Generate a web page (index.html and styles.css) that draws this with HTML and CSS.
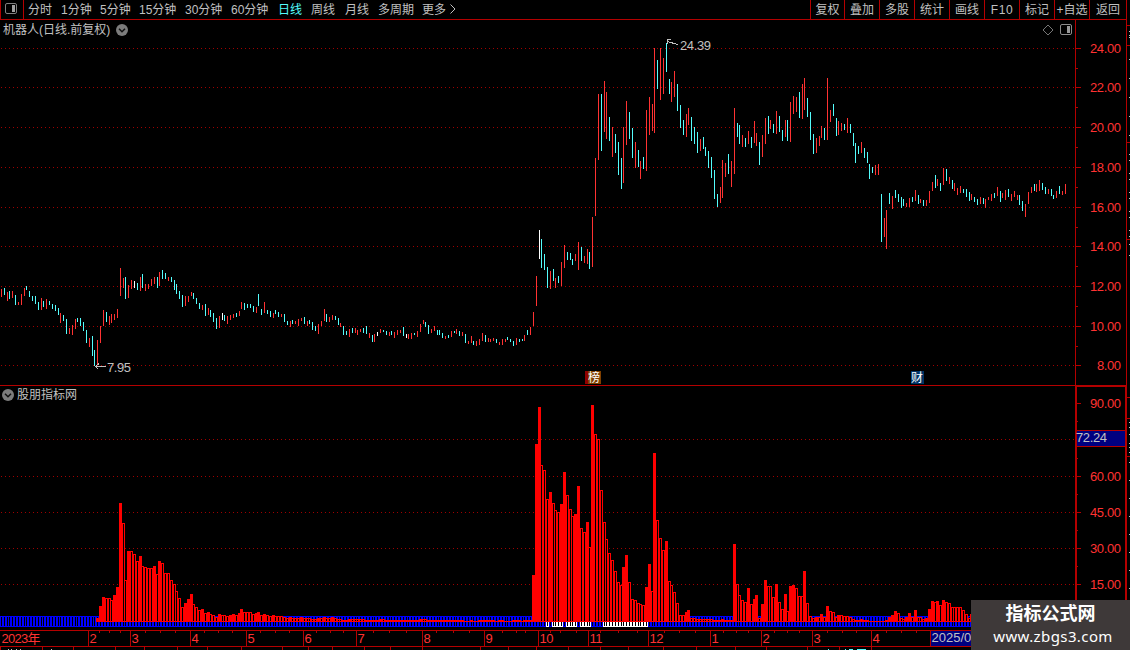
FILE: index.html
```html
<!DOCTYPE html>
<html lang="zh-CN">
<head>
<meta charset="utf-8">
<title>机器人 日线</title>
<link rel="stylesheet" href="styles.css">
</head>
<body>
<div class="terminal">
  <div class="workspace">
    <header class="toolbar">
      <button class="panel-toggle" aria-label="panel">
        <svg width="12" height="11" viewBox="0 0 12 11"><rect x=".5" y=".5" width="11" height="10" rx="1.5" fill="none" stroke="#808080"/><rect x="7" y="2" width="3" height="7" fill="#a0a0a0"/></svg>
      </button>
      <nav class="periods">
        <span>分时</span><span>1分钟</span><span>5分钟</span><span>15分钟</span><span>30分钟</span><span>60分钟</span><span class="active">日线</span><span>周线</span><span>月线</span><span>多周期</span><span>更多</span>
        <svg width="6" height="10" viewBox="0 0 6 10"><path d="M.5 .5 5 5 .5 9.5" fill="none" stroke="#c0c0c0"/></svg>
      </nav>
      <nav class="actions">
        <span>复权</span><span>叠加</span><span>多股</span><span>统计</span><span>画线</span><span class="latin">F10</span><span>标记</span><span>+自选</span><span>返回</span>
      </nav>
    </header>

    <section class="panel price">
      <svg class="plot" id="price-plot" width="1075" height="366" viewBox="0 20 1075 366"></svg>
      <svg class="axis" id="price-axis" width="52" height="366" viewBox="1075 20 52 366"></svg>
      <div class="caption">
        <span>机器人(日线.前复权)</span>
        <svg width="12" height="12" viewBox="0 0 12 12"><circle cx="6" cy="6" r="6" fill="#7c7c7c"/><path d="M3 4.7 6 7.7 9 4.7" fill="none" stroke="#111" stroke-width="1.5"/></svg>
      </div>
      <div class="tools">
        <svg width="12" height="12" viewBox="0 0 12 12"><path d="M6 1 11 6 6 11 1 6Z" fill="none" stroke="#777"/></svg>
        <svg width="12" height="12" viewBox="0 0 12 12"><rect x=".5" y=".5" width="11" height="10" rx="1.5" fill="none" stroke="#8c8c8c"/><rect x="7" y="2" width="3" height="7" fill="#999"/></svg>
      </div>
      <span class="badge rank">榜</span>
      <span class="badge finance">财</span>
    </section>

    <section class="panel indicator">
      <svg class="plot" id="volume-plot" width="1075" height="244" viewBox="0 386 1075 244"></svg>
      <svg class="axis" id="volume-axis" width="52" height="244" viewBox="1075 386 52 244"></svg>
      <div class="caption">
        <svg width="12" height="12" viewBox="0 0 12 12"><circle cx="6" cy="6" r="6" fill="#7c7c7c"/><path d="M3 4.7 6 7.7 9 4.7" fill="none" stroke="#111" stroke-width="1.5"/></svg>
        <span>股朋指标网</span>
      </div>
    </section>

    <footer class="timeline">
      <svg id="time-axis" width="1127" height="20" viewBox="0 630 1127 20"></svg>
    </footer>
  </div>
  <svg class="edge" id="edge" width="3" height="650" viewBox="1127 0 3 650"></svg>
  <aside class="watermark">
    <strong>指标公式网</strong>
    <span>www.zbgs3.com</span>
  </aside>
</div>
<script src="chart.js"></script>
</body>
</html>
```
FILE: styles.css
```css
* { box-sizing: border-box; }

body {
  margin: 0;
  background: #000;
  color: #c0c0c0;
  font: 12px/16px "Liberation Sans", "Noto Sans CJK SC", sans-serif;
}

svg { display: block; flex: none; }

.terminal {
  position: relative;
  display: flex;
  width: 1130px;
  height: 650px;
  overflow: hidden;
}

.workspace {
  display: flex;
  flex-direction: column;
  width: 1127px;
  border-right: 1px solid #b40000;
}

.toolbar {
  display: flex;
  height: 20px;
  border-bottom: 1px solid #b40000;
  white-space: nowrap;
}

.panel-toggle {
  display: flex;
  width: 24px;
  padding: 3px 0 0 4px;
  border: solid #b40000;
  border-width: 0 1px 0 1px;
  background: none;
}

.periods {
  display: grid;
  grid-template-columns: 33px 39px 39px 46px 46px 47px 33px 34px 33px 44px 28px 10px;
  padding: 2px 0 0 4px;
}

.periods svg { margin-top: 2px; }

.active { color: #54fcfc; }

.actions {
  display: grid;
  grid-template-columns: 34px repeat(7, 35px) 37px;
  margin-left: auto;
  text-align: center;
}

.actions span {
  padding-top: 2px;
  border-left: 1px solid #b40000;
}

.latin { letter-spacing: 0.6px; }

.panel {
  position: relative;
  display: flex;
}

.caption {
  position: absolute;
  top: 1px;
  left: 3px;
  display: flex;
  align-items: center;
  gap: 6px;
}

.caption span { padding-top: 1px; }

.indicator .caption {
  top: 0;
  left: 2px;
  gap: 3px;
}

.tools {
  position: absolute;
  top: 4px;
  right: 54px;
  display: flex;
  gap: 6px;
}

.badge {
  position: absolute;
  top: 351px;
  height: 13px;
  color: #fff;
  line-height: 14px;
}

.rank {
  left: 585px;
  width: 16px;
  padding-left: 3px;
  background: linear-gradient(90deg, #900000 3px, #804000 3px);
}

.finance {
  left: 911px;
  width: 13px;
  background: #003366;
}

.timeline { height: 20px; }

.tick { font-size: 13px; fill: #ff3232; }
.mark { font-size: 13px; fill: #c0c0c0; }

.watermark {
  position: absolute;
  right: 0;
  bottom: 0;
  display: flex;
  flex-direction: column;
  width: 159px;
  height: 50px;
  padding-top: 3px;
  background: #3e3939;
  color: #fff;
  text-align: center;
}

.watermark strong {
  font: 700 18px/22px "Liberation Sans", "Noto Sans CJK SC", sans-serif;
}

.watermark span {
  padding-left: 5px;
  font: 15px/22px "Noto Sans", sans-serif;
  letter-spacing: 0.4px;
  white-space: nowrap;
}
```
FILE: chart.js
```js
const RED = '#ff3232', CYAN = '#54fcfc', LINE = '#b40000';
const TONES = { r: RED, c: CYAN, w: '#ffffff' };

// Runs of candles: origin in px, then "x high low tone" in thirds of a pixel from it.
const CANDLES = [
  [0, 250, '4 117 141 r;13 114 135 c;22 126 153 r;28 123 147 c;37 123 144 r;46 135 165 c;55 156 165 r;64 132 165 r;73 114 138 r;79 108 120 c;88 123 141 c;97 138 153 c;106 138 162 c;115 156 180 c;124 144 180 r;130 153 171 c;139 147 177 r;148 153 165 c;157 162 177 c;166 165 183 c;175 174 195 c;181 189 219 r;190 195 213 c;199 207 252 c;208 234 252 r;217 225 255 r;226 207 237 r;232 204 216 c;241 204 228 c;250 216 243 c;259 240 279 c;268 264 291 r;277 258 318 c;283 300 348 c;292 270 345 r;301 228 279 r;310 180 228 r;319 186 216 c;328 198 225 r;334 192 219 r;343 192 210 r;352 177 204 r;361 54 138 r;370 84 114 r;376 81 147 c;385 105 144 r;394 90 117 r;403 93 114 w;412 99 120 c;421 81 123 r;427 72 114 c;436 102 123 r;445 102 117 r;454 87 108 r;463 81 102 r;472 81 114 c;478 66 108 r;487 60 87 c;496 69 87 c;505 81 93 r;514 81 96 c;523 90 120 c;529 102 132 c;538 123 147 c;547 135 171 c;556 138 168 r;565 138 156 r;574 126 138 r;580 129 147 c;589 144 162 c;598 159 177 c;607 165 180 r;616 162 198 c;625 174 195 r;631 180 201 c;640 189 216 c;649 204 237 c;658 198 234 r;667 189 210 w;673 195 213 c;682 198 222 r;691 195 210 r;700 192 204 r;709 189 201 c;718 183 198 r;724 156 177 r;733 159 180 c;742 162 174 c;751 162 174 c;760 168 186 c;769 171 189 r;775 132 168 c'],
  [260, 270, '4 117 135 c;13 96 129 r;22 120 132 c;31 123 141 c;40 129 144 r;46 120 132 c;55 126 141 c;64 132 141 r;73 132 156 c;82 153 165 c;91 153 171 r;97 150 162 c;106 153 162 r;115 147 168 r;124 144 153 r;133 141 162 c;142 153 168 r;148 150 162 c;157 156 180 c;166 168 183 c;175 162 192 r;184 153 168 r;193 117 153 r;199 132 156 c;208 141 156 r;217 135 150 r;226 138 150 c;235 144 165 c;241 159 171 r;250 168 195 c;259 183 195 c;268 177 201 r;277 174 189 c;286 174 189 r;292 180 195 r;301 177 186 r;310 174 189 c;319 168 192 c;328 189 204 r;337 195 216 c;343 192 216 r;352 186 198 w;361 177 189 r;370 180 186 c;379 183 195 c;388 186 198 r;394 183 195 c;403 186 204 r;412 180 195 r;421 180 189 r;430 171 198 c;439 192 204 w;445 192 207 r;454 189 207 r;463 189 195 c;472 183 201 r;481 162 186 r;490 150 162 r;496 156 171 c;505 165 192 c;514 177 189 r;523 168 183 r;532 180 195 c;538 180 195 c;547 189 204 c;556 198 207 r;565 195 204 c;574 183 201 r;583 183 189 c;589 177 192 r;598 183 198 c;607 186 198 r;616 192 219 c;625 213 222 r;634 198 219 r;640 213 225 c;649 213 228 r;658 207 225 r;667 189 213 r;676 195 216 c;685 204 216 r;691 207 216 r;700 204 213 r;709 207 219 c;718 216 225 r;727 207 225 r;736 207 216 r;742 201 210 c;751 207 216 c;760 213 228 c;769 204 225 r;778 207 216 c;787 207 213 c;793 195 213 r;802 180 195 c;811 171 195 r;820 126 168 r;829 18 108 r'],
  [520, 30, '58 600 687 w;64 627 714 c;73 672 720 c;82 711 774 c;91 723 777 r;100 717 753 c;106 744 774 r;115 738 759 c;124 696 768 r;133 645 714 r;142 666 690 c;151 669 690 c;157 687 705 c;166 672 693 r;175 636 720 r;184 651 693 c;193 678 699 r;202 657 702 r;208 666 717 c;217 561 711 r;226 384 558 r;235 192 390 r;244 192 363 c;253 153 306 r;259 186 327 r;268 261 333 c;277 291 381 r;286 312 369 c;295 336 435 c;304 384 477 c;310 291 459 r;319 213 345 r;328 246 327 c;337 294 384 c;346 336 414 r;355 360 411 c;361 393 447 r;370 381 417 c;379 240 423 r;388 201 315 r;397 222 303 r;403 54 309 r;412 90 177 c;421 54 210 r'],
  [660, 30, '10 84 192 r;19 39 126 c;28 147 192 c;34 156 216 r;43 123 201 r;52 162 243 c;61 225 294 c;70 270 315 c;79 252 321 r;85 234 285 r;94 261 333 c;103 291 342 c;112 306 369 c;121 327 363 r;130 321 357 c;136 351 378 c;145 363 414 c;154 381 444 c;163 420 507 c;172 492 531 c;181 471 519 r;187 390 504 r;196 399 441 r;205 372 432 c;214 393 471 r;223 234 432 r;232 279 321 c;238 285 342 c;247 315 351 r;256 324 351 c;265 303 342 r;274 321 354 c;283 273 339 r;289 309 348 r;298 336 405 c;307 315 381 r;316 264 342 r;325 258 312 c;331 270 297 r;340 282 309 c;349 243 312 r;358 258 306 c;367 300 333 c;376 270 321 r;382 270 333 c;391 216 336 r;400 198 252 r;409 201 246 r;418 186 264 c;427 162 267 r;433 144 240 r;442 204 261 c;451 246 330 c;460 312 372 c;469 324 369 r;478 318 348 r;484 288 324 r;493 294 330 c;502 144 330 r;511 240 276 r;520 222 258 c;529 264 318 c;535 273 315 r;544 279 303 r;553 282 300 c;562 264 309 r;571 282 309 c;580 309 348 c;586 339 399 c;595 348 372 c;604 336 369 r;613 354 384 c;622 366 399 c;628 402 447 c;637 411 429 c;646 405 435 r;655 402 435 r'],
  [860, 140, '64 162 306 c;73 234 291 r;79 210 327 r;88 159 192 c;97 168 207 r;106 150 174 c;115 162 186 c;124 171 204 c;130 177 198 c;139 189 201 r;148 174 201 r;157 171 186 c;166 150 183 r;175 165 192 c;181 177 189 r;190 180 198 c;199 180 198 r;208 153 189 r;217 126 153 r;226 105 144 c;232 117 138 r;241 129 153 c;250 84 135 r;259 87 123 c;268 111 132 r;277 120 147 c;283 129 153 r;292 144 165 r;301 138 159 r;310 147 159 c;319 147 171 c;328 156 183 c;334 162 180 r;343 171 186 c;352 177 195 c;361 171 192 r;370 174 192 c;376 177 204 r;385 171 180 r;394 162 183 r;403 159 174 c;412 141 168 r;421 153 186 c;427 159 174 r;436 150 180 r;445 147 171 c;454 162 183 r;463 153 171 r;472 165 180 r;478 165 195 c;487 183 213 c;496 192 231 r;505 156 192 r;514 141 159 r;523 132 153 c;529 132 156 r;538 120 153 r;547 129 150 c;556 141 162 c;565 147 162 r;574 147 168 c;580 165 177 c;589 153 174 r;598 138 162 c;607 153 165 r;616 132 162 r']
];

// Indicator bars: same units, "x top".
const BARS = [
  [0, 490, '292 384;301 348;310 321;319 324;328 324;334 330;343 315;352 291;361 39;370 99;376 270;385 183;394 183;403 192;412 213;421 198;427 228;436 231;445 234;454 234;463 228;472 252;478 213;487 219;496 249;505 249;514 270;523 282;529 303;538 324;547 351;556 339;565 327;574 312;580 342;589 351;598 360;607 357;616 369;625 366;631 372;640 375;649 381;658 372;667 375;673 375;682 378;691 375;700 372;709 375;718 369;724 357;733 366;742 366;751 366;760 372;769 369;775 366;784 375'],
  [260, 600, '4 45;13 42;22 45;31 48;40 45;46 48;55 48;64 48;73 51;82 54;91 51;97 54;106 54;115 54;124 51;133 54;142 54;148 54;157 57;166 57;175 54;184 54;193 51;199 54;208 54;217 51;226 54;235 57;241 57;250 60;259 60;268 57;277 57;286 57;292 57;301 57;310 57;319 60;328 60;337 60;343 60;352 60;361 57;370 57;379 60;388 60;394 60;403 60;412 60;421 60;430 60;439 60;445 60;454 60;463 60;472 60;481 57;490 57;496 57;505 60;514 60;523 60;532 60;538 60;547 60;556 60;565 60;574 60;583 60;589 60;598 60;607 60;634 60;658 60;667 60;676 60;685 60;691 60;700 60;718 60;727 60;760 60;769 60;778 60;793 60;802 60;811 60'],
  [520, 360, '40 645;49 252;58 141;64 315;73 330;82 417;91 396;100 429;106 450;115 456;124 432;133 336;142 405;151 447;157 468;166 462;175 378;184 504;193 516;202 486;208 561;217 135;226 222;235 237;244 390;253 486;259 537;268 579;277 600;286 633;295 666;304 675;310 621;319 585;328 666;337 717;346 720;355 729;361 732;370 735;379 681;388 612;397 693;403 279;412 480;421 534;430 570;439 543;448 663;454 675;463 696;472 729;481 765;490 765;499 756;505 750'],
  [680, 530, '34 264;43 264;52 267;61 267;70 267;76 267;85 267;94 267;103 270;112 270;121 270;127 267;136 270;145 270;154 270;163 42;172 162;178 195;187 210;196 216;205 174;214 222;223 207;229 195;238 264;247 222;256 150;265 168;271 168;280 201;289 162;298 216;307 237;316 192;322 243;331 168;340 165;349 174;358 198;367 198;373 123;382 219;391 258;400 264;409 261;418 261;424 252;433 261;442 228;451 243;460 246;469 261;475 255;484 255;493 258;502 258;511 261;520 267;526 270;535 270;544 267;553 270;562 270'],
  [870, 360, '49 780;58 771;67 765;76 753;85 759;94 774;100 777;109 771;118 759;127 771;136 750;145 771;151 771;160 777;169 774;178 747;187 723;196 726;202 723;211 735;220 720;229 726;238 729;247 741;253 741;262 741;271 741;280 750;289 762;298 774;304 762']
];

const rect = (x, y, w, h, fill) => `<rect x="${x}" y="${y}" width="${w}" height="${h}" fill="${fill}" shape-rendering="crispEdges"/>`;
const dots = (y) => `<path d="M1 ${y + 0.5}H1075" stroke="#a00000" stroke-dasharray="1 3" shape-rendering="crispEdges"/>`;
const label = (x, y, text, cls, w) => `<text class="${cls}" x="${x}" y="${y}"${w ? ` textLength="${w}"` : ''}>${text}</text>`;
const put = (id, parts) => { document.getElementById(id).innerHTML = parts.join(''); };

const expand = (runs) => runs.flatMap(([ox, oy, data]) => data.split(';').map((row) => {
  const [x, a, b, tone] = row.split(' ');
  return { x: ox + Math.floor(x / 3), top: oy + Math.round(a / 3), low: oy + Math.round(b / 3), tone };
}));

const candles = expand(CANDLES);
const bars = expand(BARS);

// Price panel
const priceRows = [48, 87, 127, 167, 207, 246, 286, 326, 365];
put('price-plot', [
  ...priceRows.map(dots),
  ...candles.map((c) => rect(c.x, c.top, 1, c.low - c.top, TONES[c.tone])),
  rect(0, 385, 1075, 1, LINE),
  '<path d="M106 366.5H95M99 363.5 95.5 366.5 98.5 369.5M678 44.5 667 41.5M671 39.5H667V44" fill="none" stroke="#c0c0c0" shape-rendering="crispEdges"/>',
  label(107, 372, '7.95', 'mark', 24),
  label(680, 50, '24.39', 'mark', 31)
]);
put('price-axis', [
  rect(1075, 20, 1, 366, LINE),
  ...priceRows.flatMap((y, i) => [
    rect(1076, y, 5, 1, LINE),
    i < 8 ? rect(1076, y + 20, 2, 1, LINE) : '',
    label(i < 8 ? 1090 : 1097, y + 5, (24 - i * 2).toFixed(2), 'tick', i < 8 ? 31 : 24)
  ]),
  rect(1075, 385, 52, 1, LINE)
]);

// Indicator panel
const BASE = 621;
const whiteSpans = [[547, 548], [553, 562], [567, 576], [581, 590], [604, 647]];
const isWhite = (x) => whiteSpans.some(([a, b]) => x >= a && x <= b);
put('volume-plot', [
  ...[439, 476, 512, 548, 584].map(dots),
  ...candles.map((c) => rect(c.x - 1, 616, 3, 11, '#0000ff') + rect(c.x, 617, 1, 9, '#000')),
  ...candles.filter((c) => isWhite(c.x)).map((c) => rect(c.x - 1, 622, 3, 5, '#fff') + rect(c.x, 622, 1, 4, '#000')),
  ...bars.map((b, i) => {
    const rising = i === 0 || b.top < bars[i - 1].top;
    const body = rect(b.x - 1, b.top, 3, BASE - b.top, '#ff0000');
    return rising ? body : body + rect(b.x, b.top + 1, 1, Math.max(0, BASE - b.top - 1), '#000');
  }),
  rect(96, BASE, 979, 1, '#ff0000')
]);
put('volume-axis', [
  rect(1075, 386, 2, 244, LINE), rect(1125, 386, 2, 244, LINE), rect(1075, 386, 52, 1, LINE),
  ...[[403, '90.00'], [476, '60.00'], [512, '45.00'], [548, '30.00'], [584, '15.00']].map(([y, t]) =>
    rect(1077, y, 4, 1, LINE) + label(1090, y + 5, t, 'tick', 31)),
  ...[421, 458, 494, 530, 566].map((y) => rect(1077, y, 1, 1, LINE)),
  rect(1077, 430, 49, 17, LINE), rect(1077, 431, 48, 15, '#000080'),
  label(1076, 442, '72.24', 'mark', 31)
]);

// Time axis
const months = [[0, '2023年', 39], [88, '2'], [130, '3'], [190, '4'], [246, '5'], [303, '6'], [356, '7'], [422, '8'], [484, '9'], [538, '10', 14], [588, '11', 13], [648, '12', 14], [710, '1'], [761, '2'], [812, '3'], [871, '4']];
const upper = [99, 109, 120, 145, 160, 175, 204, 218, 232, 260, 275, 289, 316, 330, 343, 373, 389, 406, 436, 453, 469, 502, 516, 525, 550, 560, 576, 600, 618, 637, 664, 679, 695, 723, 736, 748, 774, 787, 799, 827, 842, 856, 886, 901, 916];
const lower = [0, 42, 73, 115, 144, 177, 207, 241, 282, 308, 332, 364, 390, 422, 480, 508, 536, 568, 600, 628, 663, 696, 735, 766, 807, 839, 871];
put('time-axis', [
  rect(0, 630, 1127, 1, LINE), rect(0, 646, 1127, 1, LINE),
  ...months.map(([x, t, w]) => (x ? rect(x, 631, 1, 15, LINE) : '') + label(x + 1.5, 643, t, 'tick', w)),
  ...upper.map((x) => rect(x, 631, 1, 2, LINE)),
  ...lower.map((x) => rect(x, 647, 1, 3, LINE)),
  rect(930, 631, 1, 15, LINE), rect(931, 631, 60, 15, '#000080'),
  label(931.5, 642, '2025/05', 'mark', 47),
  ...[8, 11, 16, 20, 51].map((x) => rect(x, 649, 1, 1, '#c0c0c0')),
  ...[[828, 1], [845, 1], [849, 4], [857, 9]].map(([x, w]) => rect(x, 649, w, 1, CYAN))
]);

// Sliver of the neighbouring window
put('edge', [
  ...[25, 45, 142, 239, 397, 418, 456].map((y) => rect(1127, y, 3, 1, LINE)),
  ...[31, 35, 37, 59, 78, 97, 116, 135, 154, 160, 173, 179, 192, 198, 211, 217, 230, 236, 244, 255, 422, 427, 434, 443, 447, 452, 462, 480, 498, 516, 534, 552, 570, 588].map((y) => rect(1129, y, 1, 1, '#c0c0c0'))
]);
```
